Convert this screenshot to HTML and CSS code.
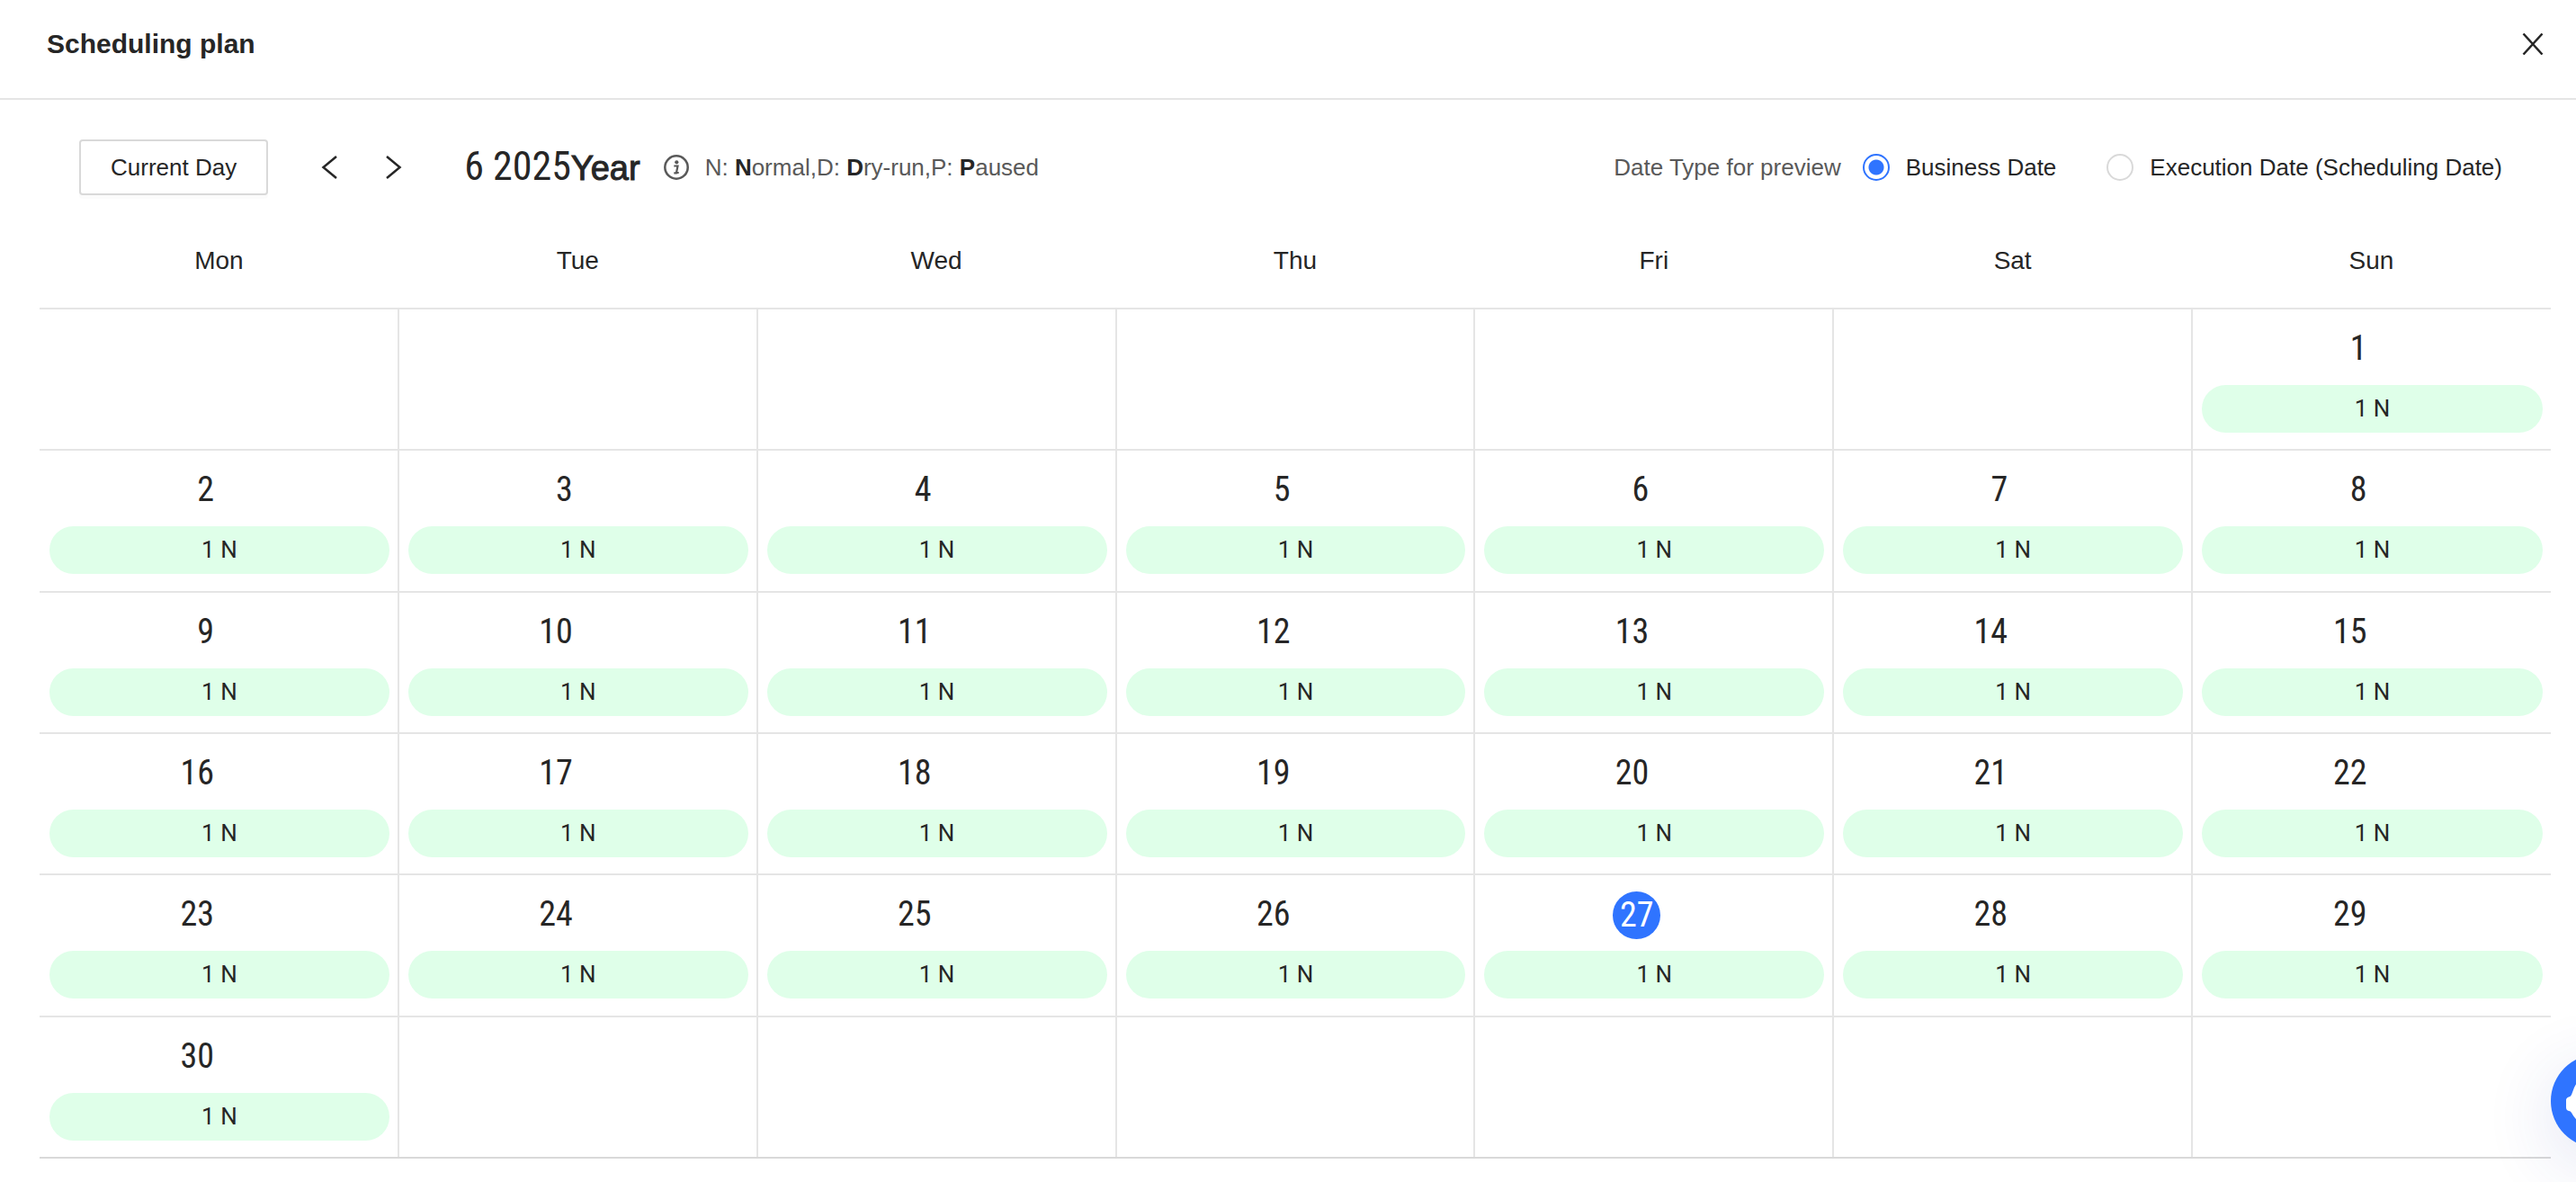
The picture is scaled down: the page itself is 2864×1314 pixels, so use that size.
FILE: index.html
```html
<!DOCTYPE html>
<html lang="en">
<head>
<meta charset="utf-8">
<title>Scheduling plan</title>
<link rel="stylesheet" href="styles.css">
</head>
<body>
<header class="header">
  <h1 class="header-title">Scheduling plan</h1>
  <button class="icon-button" type="button" aria-label="Close">
    <svg class="icon" width="24" height="24" viewBox="0 0 24 24"><path d="M1.500 .5l21 23M22.500 .5l-21 23"/></svg>
  </button>
</header>
<main class="main">
  <div class="toolbar">
    <button class="today-button" type="button">Current Day</button>
    <div class="pager">
      <button class="icon-button" type="button" aria-label="Previous month">
        <svg class="icon" width="20" height="28" viewBox="0 0 20 28"><path d="M18 2L3.500 14L18 26"/></svg>
      </button>
      <button class="icon-button" type="button" aria-label="Next month">
        <svg class="icon" width="20" height="28" viewBox="0 0 20 28"><path d="M2 2L16.500 14L2 26"/></svg>
      </button>
    </div>
    <h2 class="month">6 2025<span class="month-unit">Year</span></h2>
    <div class="legend">
      <svg width="28" height="28" viewBox="0 0 28 28"><circle cx="14" cy="14" r="12.700" fill="none" stroke="#595959" stroke-width="2.500"/><circle cx="14.300" cy="8.300" r="2.100" fill="#595959"/><path d="M11.300 12.500h4.200l-1.500 7.500h2.700M11.300 20.300h3.500" fill="none" stroke="#595959" stroke-width="2.200"/></svg>
      <span>N: <b>N</b>ormal,D: <b>D</b>ry-run,P: <b>P</b>aused</span>
    </div>
    <div class="date-type" role="radiogroup" aria-labelledby="date-type-label">
      <span class="date-type-label" id="date-type-label">Date Type for preview</span>
      <label class="option"><input class="radio" type="radio" name="date-type" checked>Business Date</label>
      <label class="option"><input class="radio" type="radio" name="date-type">Execution Date (Scheduling Date)</label>
    </div>
  </div>
  <table class="calendar">
    <thead>
      <tr><th>Mon</th><th>Tue</th><th>Wed</th><th>Thu</th><th>Fri</th><th>Sat</th><th>Sun</th></tr>
    </thead>
    <tbody id="days"></tbody>
  </table>
</main>
<button class="assistant" type="button" aria-label="Assistant">
  <svg width="72" height="60" viewBox="0 0 72 60"><path d="M36 0C24 0 14 6 10 15L7 23Q6 25 4 25.500Q1 26.500 1 29v8Q1 40.500 4 41Q6 41 7 43C12 53 22 59 36 59s24-6 29-16q1-2 3-2q3-.5 3-4v-8q0-2.500-3-3.500Q66 25 65 23l-3-8C58 6 48 0 36 0z" fill="#fff"/></svg>
</button>
<script src="calendar.js"></script>
</body>
</html>
```
FILE: styles.css
```css
* { box-sizing: border-box; }

body {
  margin: 0;
  background: #fff;
  color: #262626;
  font: 26px/40px "Liberation Sans", Arial, sans-serif;
  overflow-x: hidden;
}

button {
  font: inherit;
  color: inherit;
  cursor: pointer;
}

.header {
  display: flex;
  align-items: center;
  justify-content: space-between;
  height: 111px;
  padding: 0 36px 12px 52px;
  border-bottom: 2px solid #e5e5e5;
}

.header-title {
  margin: 0;
  font-size: 30px;
}

.icon-button {
  display: flex;
  padding: 0;
  border: 0;
  background: none;
}

.icon {
  fill: none;
  stroke: #262626;
  stroke-width: 2.5;
}

.main { padding: 44px 28px 26px 44px; }

.toolbar {
  display: flex;
  align-items: center;
  padding: 0 54px 0 44px;
}

.today-button {
  height: 62px;
  padding: 0 33px;
  border: 2px solid #d9d9d9;
  border-radius: 4px;
  background: #fff;
  box-shadow: 0 4px 0 rgba(0, 0, 0, 0.016);
}

.pager {
  display: flex;
  gap: 52px;
  margin: 0 68px 0 58px;
}

.month {
  margin: 0;
  font: 44px/60px "Roboto Condensed", "Liberation Sans Narrow", Roboto, sans-serif;
}

.month-unit {
  font: 38px/60px "Liberation Sans", Arial, sans-serif;
  -webkit-text-stroke: 1px #262626;
}

.legend {
  display: flex;
  align-items: center;
  gap: 18px;
  margin-left: 26px;
  color: #595959;
}

.legend b { color: #262626; }

.date-type {
  display: flex;
  align-items: center;
  margin-left: auto;
}

.date-type-label { color: #595959; }

.option {
  display: flex;
  align-items: center;
  gap: 18px;
  margin-left: 24px;
}

.option + .option { margin-left: 56px; }

.radio {
  appearance: none;
  width: 30px;
  height: 30px;
  margin: 0;
  border: 2px solid #d9d9d9;
  border-radius: 50%;
  background: #fff;
}

.radio:checked {
  border-color: #2f74ff;
  background: radial-gradient(circle, #2f74ff 8px, #fff 9px);
}

.calendar {
  width: 100%;
  margin-top: 20px;
  border-collapse: collapse;
  table-layout: fixed;
}

.calendar th {
  height: 106px;
  padding: 0;
  font-size: 28px;
  font-weight: normal;
}

.calendar td {
  height: 157px;
  padding: 18px 9px 0 10px;
  border: 2px solid #e5e5e5;
  vertical-align: top;
}

.calendar tr:nth-child(3n + 2) td { height: 158px; }
.calendar td:first-child { border-left: 0; padding-left: 11px; }
.calendar td:last-child { border-right: 0; }
.calendar tr:last-child td { border-bottom-color: #d9d9d9; }

.day {
  display: flex;
  justify-content: flex-end;
  width: calc(50% + 7px);
  height: 53px;
  margin-bottom: 13px;
  font: 38px/50px "Roboto Condensed", "Liberation Sans Narrow", Roboto, sans-serif;
}

.day-number { padding-right: 13px; }

.day-number.today {
  width: 53px;
  padding: 0;
  border-radius: 50%;
  background: #2f74ff;
  color: #fff;
  line-height: 53px;
  text-align: center;
}

.run {
  height: 53px;
  border-radius: 27px;
  background: #dfffe9;
  font: 26px/53px Roboto, sans-serif;
  text-align: center;
}

.assistant {
  position: fixed;
  right: -76px;
  bottom: 38px;
  display: flex;
  align-items: center;
  justify-content: center;
  width: 104px;
  height: 104px;
  padding: 0;
  border: 0;
  border-radius: 50%;
  background: #2f74ff;
  box-shadow: 0 18px 80px rgba(40, 60, 160, 0.14);
}
```
FILE: calendar.js
```javascript
const DAYS_IN_MONTH = 30;
const FIRST_COLUMN = 6;
const TODAY = 27;

const body = document.getElementById('days');
for (let week = 0; week < 6; week++) {
  const row = body.insertRow();
  for (let column = 0; column < 7; column++) {
    const cell = row.insertCell();
    const day = week * 7 + column - FIRST_COLUMN + 1;
    if (day < 1 || day > DAYS_IN_MONTH) continue;
    const state = day === TODAY ? ' today' : '';
    cell.innerHTML = `<div class="day"><span class="day-number${state}">${day}</span></div><div class="run">1 N</div>`;
  }
}
```
